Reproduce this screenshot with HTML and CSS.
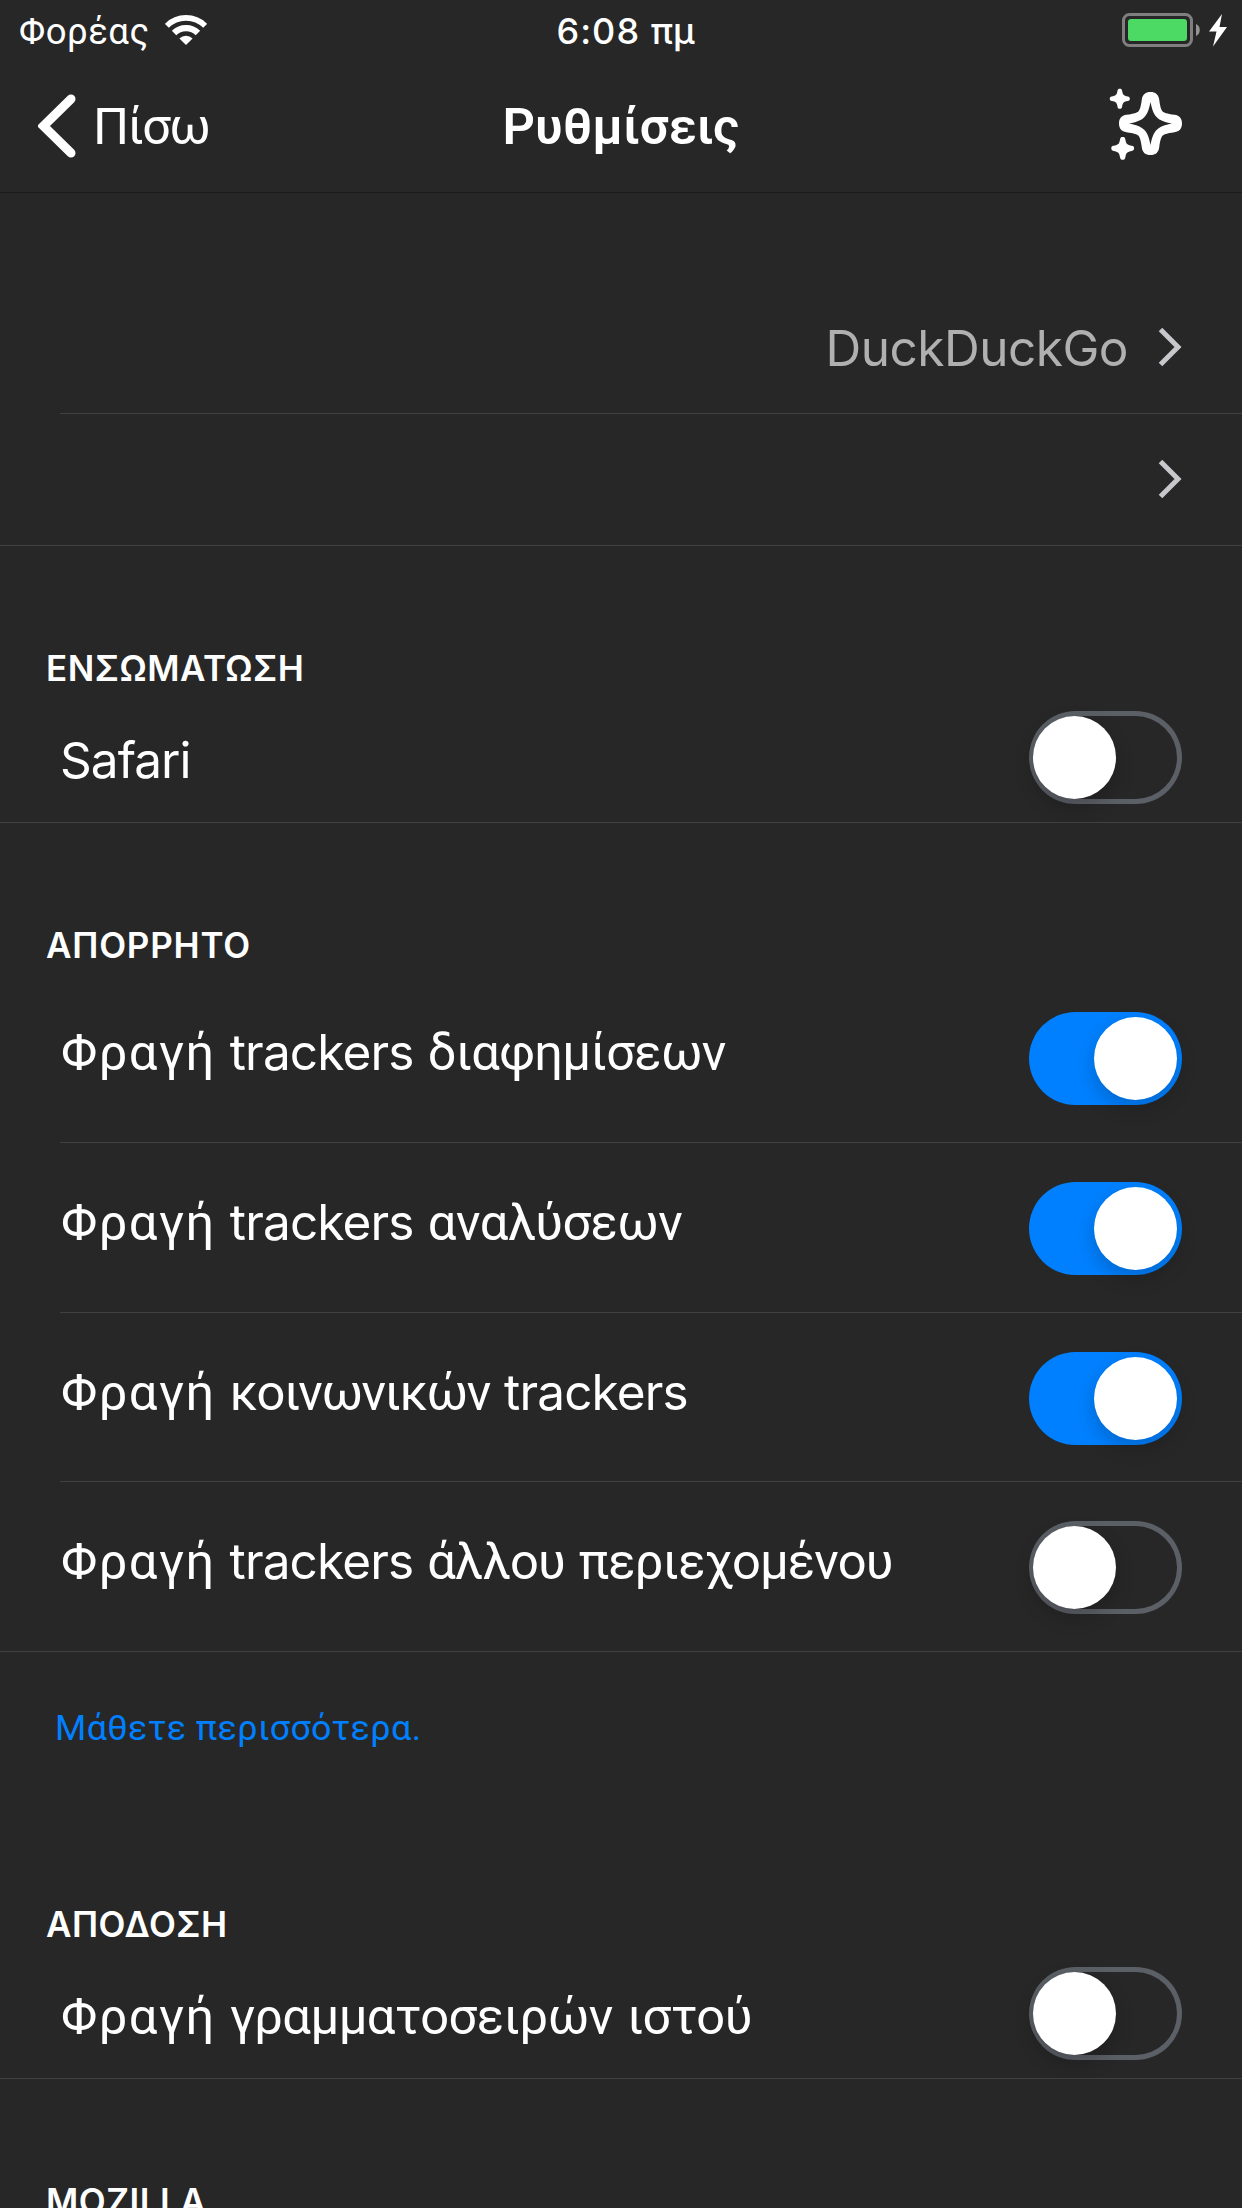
FILE: index.html
```html
<!DOCTYPE html>
<html lang="el">
<head>
<meta charset="utf-8">
<title>Ρυθμίσεις</title>
<link rel="stylesheet" href="styles.css">
</head>
<body>
<div class="screen">
  <header class="status">
    <div class="carrier">
      <span class="carrier-name">Φορέας</span>
      <svg class="wifi" width="42" height="30" viewBox="0 0 42 30">
        <path d="M1.8 10.8A27.2 27.2 0 0 1 40.2 10.8" fill="none" stroke="#fff" stroke-width="5.6"/>
        <path d="M9.05 18.05A16.9 16.9 0 0 1 32.95 18.05" fill="none" stroke="#fff" stroke-width="6.2"/>
        <path d="M21 30L14.4 23.4A9.3 9.3 0 0 1 27.6 23.4Z" fill="#fff"/>
      </svg>
    </div>
    <div class="time">6:08 <span class="greek">πμ</span></div>
    <svg class="battery" width="106" height="34" viewBox="0 0 106 34">
      <rect x="1.5" y="1.5" width="68" height="31" rx="6" fill="none" stroke="#7f7f7f" stroke-width="3"/>
      <rect x="6" y="6" width="59" height="22" rx="3" fill="#4cd964"/>
      <path d="M74 11C79 12.5 79 21.5 74 23Z" fill="#939393"/>
      <path d="M100 1L87 18.5H94.500L91 33.500L105 14H97.500Z" fill="#fff"/>
    </svg>
  </header>

  <nav class="navbar">
    <a class="back">
      <svg width="38" height="64" viewBox="0 0 38 64"><path d="M33 5L5.500 32L33 59" fill="none" stroke="#fff" stroke-width="9" stroke-linecap="round"/></svg>
      <span class="back-text">Πίσω</span>
    </a>
    <h1 class="title">Ρυθμίσεις</h1>
    <svg class="sparkles" width="84" height="80" viewBox="0 0 84 80" fill="#fff">
      <defs>
        <path id="star" d="M0-10C1.500-10 2-9.500 2.300-8C2.900-4 4-2.900 8-2.300C9.500-2 10-1.500 10 0C10 1.500 9.500 2 8 2.300C4 2.900 2.900 4 2.300 8C2 9.500 1.500 10 0 10C-1.500 10-2 9.500-2.300 8C-2.900 4-4 2.900-8 2.300C-9.500 2-10 1.500-10 0C-10-1.500-9.500-2-8-2.300C-4-2.900-2.900-4-2.300-8C-2-9.500-1.500-10 0-10Z"/>
      </defs>
      <use href="#star" transform="translate(12.800 14.700)"/>
      <use href="#star" transform="translate(15.700 64.300) scale(1.140)"/>
      <path transform="translate(43.500 39.500)" fill-rule="evenodd" d="M0-31.500C5-31.500 8-29 8.700-24C9.700-16 11-13 12.200-12C13.500-11 16-9.700 24-8.700C29-8 31.500-5 31.500 0C31.500 5 29 8 24 8.700C16 9.700 13.500 11 12.200 12C11 13 9.700 16 8.700 24C8 29 5 31.500 0 31.500C-5 31.500-8 29-8.700 24C-9.700 16-11 13-12.200 12C-13.500 11-16 9.700-24 8.700C-29 8-31.500 5-31.500 0C-31.500-5-29-8-24-8.700C-16-9.700-13.500-11-12.200-12C-11-13-9.700-16-8.700-24C-8-29-5-31.500 0-31.500ZM0-21.500C-1.500-14-3-9.500-6.300-6.300C-9.500-3-14-1.500-21.500 0C-14 1.500-9.500 3-6.300 6.300C-3 9.500-1.500 14 0 21.500C1.500 14 3 9.500 6.300 6.300C9.500 3 14 1.500 21.500 0C14-1.500 9.500-3 6.300-6.300C3-9.500 1.500-14 0-21.500Z"/>
    </svg>
  </nav>

  <main>
    <section class="group group-search">
      <div class="row row-link inset">
        <span class="value">DuckDuckGo</span>
        <svg class="chevron" width="24" height="40" viewBox="0 0 24 40"><path d="M2.500 2.500L20 20L2.500 37.500" fill="none" stroke="#c7c7cc" stroke-width="5"/></svg>
      </div>
      <div class="row row-link">
        <svg class="chevron" width="24" height="40" viewBox="0 0 24 40"><path d="M2.500 2.500L20 20L2.500 37.500" fill="none" stroke="#c7c7cc" stroke-width="5"/></svg>
      </div>
    </section>

    <section class="group">
      <h2 class="heading">ΕΝΣΩΜΑΤΩΣΗ</h2>
      <div class="row row-single">
        <span class="label"><span class="latin safari">Safari</span></span>
        <span class="switch"></span>
      </div>
    </section>

    <section class="group">
      <h2 class="heading heading-wide heading-privacy">ΑΠΟΡΡΗΤΟ</h2>
      <div class="row row-tall inset">
        <span class="label"><span class="lead">Φραγή</span> <span class="latin">trackers</span> διαφημίσεων</span>
        <span class="switch on"></span>
      </div>
      <div class="row row-tall inset">
        <span class="label loose"><span class="lead">Φραγή</span> <span class="latin">trackers</span> αναλύσεων</span>
        <span class="switch on"></span>
      </div>
      <div class="row row-tall row-short inset">
        <span class="label"><span class="lead">Φραγή</span> <span class="tight">κοινωνικών</span> <span class="latin">trackers</span></span>
        <span class="switch on"></span>
      </div>
      <div class="row row-tall">
        <span class="label snug"><span class="lead">Φραγή</span> <span class="latin">trackers</span> άλλου περιεχομένου</span>
        <span class="switch"></span>
      </div>
      <div class="footnote"><a class="more">Μάθετε περισσότερα.</a></div>
    </section>

    <section class="group">
      <h2 class="heading">ΑΠΟΔΟΣΗ</h2>
      <div class="row row-single">
        <span class="label loose fonts"><span class="lead">Φραγή</span> γραμματοσειρών ιστού</span>
        <span class="switch"></span>
      </div>
    </section>

    <section class="group">
      <h2 class="heading">MOZILLA</h2>
    </section>
  </main>
</div>
</body>
</html>
```
FILE: styles.css
```css
* { box-sizing: border-box; }

body {
  margin: 0;
  background: #272727;
  color: #fff;
  font-family: Inter, "Liberation Sans", sans-serif;
}

.screen {
  width: 1242px;
  height: 2208px;
  overflow: hidden;
  display: flex;
  flex-direction: column;
}

.screen svg { display: block; flex: none; }

/* Status bar */
.status {
  height: 60px;
  flex: none;
  display: grid;
  grid-template-columns: 1fr auto 1fr;
  line-height: 62px;
  white-space: nowrap;
}

.carrier { display: flex; padding-left: 19px; }
.carrier-name {
  width: 146px;
  font: 400 36.500px/64px Roboto, sans-serif;
  letter-spacing: 0.500px;
}
.wifi { margin-top: 15px; }

.time {
  padding-left: 9px;
  font-size: 36px;
  font-weight: 550;
  letter-spacing: 1.050px;
}
.greek { letter-spacing: 0; }

.battery { justify-self: end; margin: 13px 14px 0 0; }

/* Navigation bar */
.navbar {
  height: 133px;
  flex: none;
  display: grid;
  grid-template-columns: 1fr auto 1fr;
  border-bottom: 1px solid #1b1b1b;
  font-family: Roboto, sans-serif;
  font-size: 50.600px;
  line-height: 132px;
}

.back { display: flex; padding-left: 38px; }
.back svg { margin-top: 34px; }
.back-text { margin: 1px 0 0 17px; height: 132px; letter-spacing: -1.600px; }

.title { margin: 1px 0 0; height: 130px; font-size: inherit; font-weight: 600; }

.sparkles { justify-self: end; margin: 24px 51px 0 0; }

/* Settings groups */
.group-search { padding-top: 89px; }

.heading {
  margin: 0;
  padding: 100px 0 0 46px;
  font-size: 35px;
  font-weight: 600;
  line-height: 44px;
  letter-spacing: 0.500px;
}
.heading-wide { letter-spacing: 0.800px; }
.heading-privacy { margin-bottom: 6px; }

.row {
  display: flex;
  justify-content: space-between;
  padding: 0 60px 0 61px;
  border-bottom: 1px solid #414141;
}

.inset { margin-left: 60px; padding-left: 1px; }

.row-link {
  height: 132px;
  justify-content: flex-end;
  align-items: center;
}
.row-link .chevron { margin: -2px 0 0; }
.value {
  margin: 0 30px 0 0;
  color: #b0b0b0;
  font-size: 49.500px;
  line-height: 60px;
  letter-spacing: -0.500px;
}

.row-single { height: 133px; padding-top: 21px; }
.row-single .label { margin-top: 19px; }
.row-single .fonts { margin-top: 20px; }

.row-tall { height: 170px; padding-top: 39px; }
.row-tall .label { margin-top: 10px; }
.row-short { height: 169px; }

.label {
  font-family: Roboto, sans-serif;
  font-size: 50.600px;
  line-height: 60px;
  letter-spacing: -0.600px;
  word-spacing: 2.200px;
  white-space: nowrap;
}
.loose { letter-spacing: -0.500px; }
.snug { letter-spacing: -0.800px; }
.lead { letter-spacing: 1.400px; }
.tight { letter-spacing: -1.350px; }
.latin {
  font-family: Inter, sans-serif;
  font-size: 49.500px;
  letter-spacing: -0.850px;
}
.safari { margin-left: -1px; letter-spacing: -0.950px; }

/* Switches */
.switch {
  flex: none;
  display: flex;
  align-items: center;
  width: 153px;
  height: 93px;
  padding: 0 5px 0 4px;
  border-radius: 47px;
  box-shadow: inset 0 0 0 5px #5b5f66;
}
.switch::before {
  content: "";
  width: 83px;
  height: 83px;
  border-radius: 50%;
  background: #fff;
  box-shadow: 0 8px 20px rgba(0, 0, 0, 0.200);
}
.switch.on {
  justify-content: flex-end;
  background: #0080ff;
  box-shadow: none;
}

.footnote { height: 150px; padding: 54px 0 0 55px; }
.more {
  display: block;
  color: #0080ff;
  font: 400 35.800px/44px Roboto, sans-serif;
  letter-spacing: 0.400px;
}
```
